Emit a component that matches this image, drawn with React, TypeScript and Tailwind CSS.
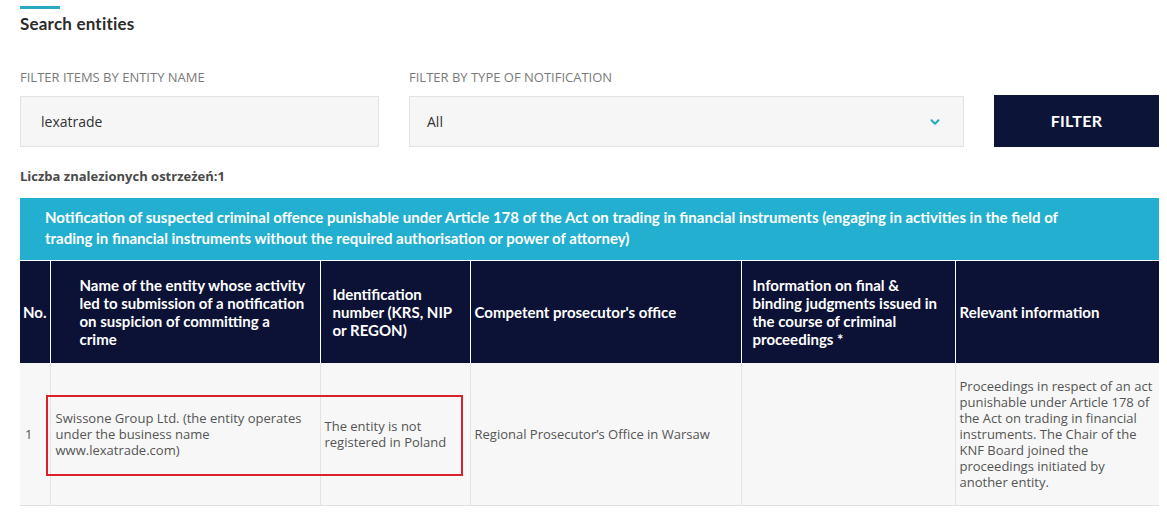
import { ChevronDown } from 'lucide-react';

const headers = [
  { label: 'No.', className: 'px-[3px]' },
  { label: 'Name of the entity whose activity led to submission of a notification on suspicion of committing a crime', className: 'pl-[29px] pr-[11px]' },
  { label: 'Identification number (KRS, NIP or REGON)', className: 'pl-[12px] pr-[10px]' },
  { label: "Competent prosecutor's office", className: 'pl-[4px] pr-2' },
  { label: 'Information on final & binding judgments issued in the course of criminal proceedings *', className: 'pl-[11px] pr-[8px]' },
  { label: 'Relevant information', className: 'pl-[4px] pr-2' },
];

export default function App() {
  return (
    <div className="w-[1167px] h-[516px] bg-white overflow-hidden font-['Lato',sans-serif]">
      <div className="ml-5 w-[1139px] pt-[6px]">
        <div className="w-10 h-[3px] bg-[#2aa8c4]" />
        <h2 className="mt-[5px] text-[17px] font-bold text-[#2b2b2b] leading-5 tracking-[0.2px]">Search entities</h2>

        <div className="mt-[35px] flex items-end">
          <div className="w-[359px] shrink-0">
            <label className="block text-[13px] text-[#7a7a7a] uppercase font-['Open_Sans',sans-serif] leading-4">
              Filter items by entity name
            </label>
            <div className="mt-[11px] h-[51px] bg-[#f6f6f6] border border-[#e2e2e2] flex items-center pl-[20px] text-[14px] text-[#333] font-['Open_Sans',sans-serif]">
              lexatrade
            </div>
          </div>
          <div className="ml-[30px] w-[555px] shrink-0">
            <label className="block text-[13px] text-[#7a7a7a] uppercase font-['Open_Sans',sans-serif] leading-4">
              Filter by type of notification
            </label>
            <div className="mt-[11px] h-[51px] bg-[#f6f6f6] border border-[#e2e2e2] flex items-center justify-between pl-[17px] pr-[21px] text-[14px] text-[#333] font-['Open_Sans',sans-serif]">
              <span>All</span>
              <ChevronDown className="w-[14px] h-[14px] text-[#2aa8c4]" strokeWidth={3.5} />
            </div>
          </div>
          <button className="ml-[30px] w-[165px] h-[52px] shrink-0 bg-[#0c1538] text-white text-[16px] font-bold tracking-[0.3px]">
            FILTER
          </button>
        </div>

        <p className="mt-[19px] text-[13px] font-bold text-[#4a4a4a] font-['Open_Sans',sans-serif] leading-5">
          Liczba znalezionych ostrzeżeń:1
        </p>

        <div className="relative mt-[12px] w-[1139px]">
          <div className="bg-[#22afd0] text-white font-bold text-[15px] leading-[21px] pl-[25px] pr-[80px] pt-[9px] pb-[11px]">
            Notification of suspected criminal offence punishable under Article 178 of the Act on trading in financial instruments (engaging in activities in the field of trading in financial instruments without the required authorisation or power of attorney)
          </div>
          <table className="w-full table-fixed border-collapse">
            <colgroup>
              <col className="w-[30px]" />
              <col className="w-[270px]" />
              <col className="w-[150px]" />
              <col className="w-[271px]" />
              <col className="w-[214px]" />
              <col className="w-[204px]" />
            </colgroup>
            <thead>
              <tr className="h-[102px] bg-[#0b1236]">
                {headers.map((h, i) => (
                  <th
                    key={i}
                    className={`text-left align-middle text-white font-bold text-[15px] leading-[18px] border-l border-r border-white first:border-l-0 last:border-r-0 border-t ${h.className}`}
                  >
                    {h.label}
                  </th>
                ))}
              </tr>
            </thead>
            <tbody className="font-['Open_Sans',sans-serif] text-[13px] leading-4 text-[#555]">
              <tr className="h-[143px] bg-[#f7f7f7] border-b border-[#e0e0e0]">
                <td className="pl-[5px] border-r border-[#e3e3e3]">1</td>
                <td className="pl-[5px] pr-2 border-r border-[#e3e3e3]">
                  Swissone Group Ltd. (the entity operates under the business name www.lexatrade.com)
                </td>
                <td className="pl-[4px] pr-2 border-r border-[#e3e3e3]">The entity is not registered in Poland</td>
                <td className="pl-[4px] pr-2 border-r border-[#e3e3e3]">Regional Prosecutor’s Office in Warsaw</td>
                <td className="border-r border-[#e3e3e3]" />
                <td className="pl-[4px] pr-1">
                  Proceedings in respect of an act punishable under Article 178 of the Act on trading in financial instruments. The Chair of the KNF Board joined the
                  <br />
                  proceedings initiated by
                  <br />
                  another entity.
                </td>
              </tr>
            </tbody>
          </table>
          <div className="absolute left-[26px] top-[197px] w-[417px] h-[81px] border-2 border-[#d9222b] pointer-events-none" />
        </div>
      </div>
    </div>
  );
}
